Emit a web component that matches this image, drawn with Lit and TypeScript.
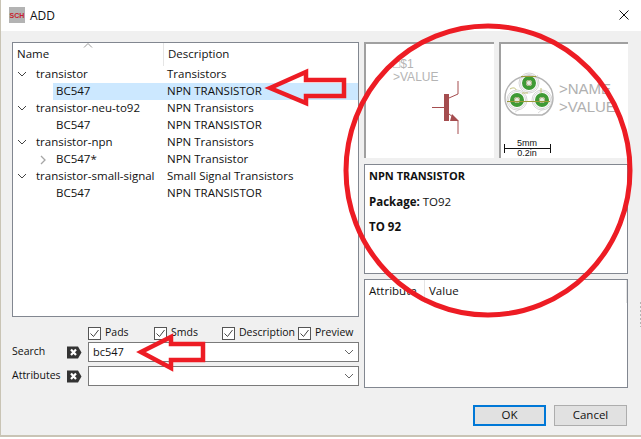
import { LitElement, html, css, svg } from "lit";
import { customElement } from "lit/decorators.js";

const rows = [
  { name: "transistor", desc: "Transistors", level: 0 },
  { name: "BC547", desc: "NPN TRANSISTOR", level: 1, selected: true },
  { name: "transistor-neu-to92", desc: "NPN Transistors", level: 0 },
  { name: "BC547", desc: "NPN TRANSISTOR", level: 1 },
  { name: "transistor-npn", desc: "NPN Transistors", level: 0 },
  { name: "BC547*", desc: "NPN Transistor", level: 1, closed: true },
  { name: "transistor-small-signal", desc: "Small Signal Transistors", level: 0 },
  { name: "BC547", desc: "NPN TRANSISTOR", level: 1 },
];

const chevron = (color: string) => html`<svg class="combo-arrow" width="10" height="6" viewBox="0 0 10 6">
  <path d="M1 1l4 4 4-4" fill="none" stroke=${color} stroke-width="1" />
</svg>`;

const clearIcon = html`<svg width="16" height="13" viewBox="0 0 16 13">
  <path d="M1 .5h11l3.5 6-3.5 6H1z" fill="#333" />
  <path d="M5 3.5l5 5.5M10 3.5L5 9" fill="none" stroke="#fff" stroke-width="2.2" />
</svg>`;

const check = (label: string) => html`<label class="check">
  <svg width="13" height="13" viewBox="0 0 13 13">
    <rect x=".5" y=".5" width="12" height="12" fill="#fff" stroke="#555" />
    <path d="M2.5 6.5l3 3 5-6.5" fill="none" stroke="#444" stroke-width="1" />
  </svg>
  <span>${label}</span>
</label>`;

const padAt = (x: number, y: number) => svg`
  <circle cx=${x} cy=${y} r="10" fill="none" stroke="#c4c4c4" stroke-width=".7" />
  <circle cx=${x} cy=${y} r="8.5" fill="none" stroke="#c4c4c4" stroke-width=".7" />
  <circle cx=${x} cy=${y} r="5" fill="none" stroke="#3f9a35" stroke-width="4" />
  <circle cx=${x} cy=${y} r="2.6" fill="#e6ece2" stroke="#8c8c50" stroke-width=".7" />
`;

@customElement("app-root")
export class AppRoot extends LitElement {
  static styles = css`
    :host {
      display: block;
      width: 641px;
      height: 439px;
      background: #fff;
      font-family: "Open Sans", "Noto Sans", sans-serif;
      font-size: 11.5px;
      color: #111;
      overflow: hidden;
    }
    .window {
      position: relative;
      height: 437px;
      box-sizing: border-box;
      border-left: 1px solid #c9c4b5;
      border-bottom: 2px solid #c9c4b5;
      display: flex;
      flex-direction: column;
    }
    .titlebar {
      height: 30px;
      flex: none;
      display: flex;
      align-items: center;
      padding: 0 12px 1px 8px;
      gap: 5px;
      background: #fff;
    }
    .app-icon {
      width: 16px;
      height: 16px;
      background: #b3b3b3;
      color: #c8202c;
      font: bold 7px "Liberation Sans", sans-serif;
      display: flex;
      align-items: center;
      justify-content: center;
    }
    .title {
      flex: 1;
      font-size: 12px;
    }
    .body {
      flex: 1;
      background: #f0f0f0;
      display: grid;
      grid-template-columns: 347px 264px;
      column-gap: 5px;
      padding: 11px 0 0 11px;
    }
    .left,
    .right {
      display: flex;
      flex-direction: column;
    }
    .tree {
      height: 275px;
      box-sizing: border-box;
      border: 1px solid #828790;
      background: #fff;
      position: relative;
    }
    .header {
      height: 23px;
      display: grid;
      grid-template-columns: 151px 1fr;
      align-items: center;
    }
    .header span {
      height: 100%;
      display: flex;
      align-items: center;
      padding: 0 0 2px 4px;
      box-sizing: border-box;
    }
    .header span:first-child {
      border-right: 1px solid #e5e5e5;
    }
    .sort {
      position: absolute;
      left: 70px;
      top: 0;
    }
    .row {
      height: 17px;
      display: grid;
      grid-template-columns: 154px 1fr;
      align-items: center;
      white-space: nowrap;
    }
    .name {
      display: flex;
      align-items: center;
      height: 100%;
    }
    .name span {
      padding-bottom: 2px;
      box-sizing: border-box;
    }
    .twist {
      width: 23px;
      flex: none;
      display: flex;
      justify-content: flex-end;
      padding: 0 9px 2px 0;
      box-sizing: border-box;
    }
    .sub .name {
      padding-left: 43px;
    }
    .sub .twist {
      width: 6px;
      margin-left: -16px;
      margin-right: 10px;
      padding: 0;
    }
    .desc {
      height: 100%;
      display: flex;
      align-items: center;
      padding-bottom: 2px;
      box-sizing: border-box;
    }
    .selected .name span,
    .selected .desc {
      background: #cce8ff;
    }
    .selected .name span {
      height: 100%;
      display: flex;
      align-items: center;
      flex: 1;
      margin-left: -3px;
      padding-left: 3px;
    }
    .checks {
      display: grid;
      grid-template-columns: 66px 68px 76px auto;
      margin: 8px 0 4px 76px;
      height: 13px;
      font-size: 10.5px;
    }
    .check {
      display: flex;
      align-items: center;
      gap: 4px;
    }
    .check span {
      padding-bottom: 2px;
    }
    .field {
      display: grid;
      grid-template-columns: 54px 22px 1fr;
      align-items: center;
      height: 20px;
      margin-bottom: 4px;
    }
    .field > span {
      font-size: 10.5px;
      padding-bottom: 2px;
    }
    .combo {
      height: 20px;
      box-sizing: border-box;
      border: 1px solid #7a7a7a;
      background: #fff;
      display: flex;
      align-items: center;
      justify-content: space-between;
      padding: 0 4px 0 4px;
      font-size: 11px;
    }
    .combo span {
      padding-bottom: 2px;
    }
    .previews {
      height: 116px;
      display: grid;
      grid-template-columns: 130px 129px;
      column-gap: 5px;
    }
    .preview {
      background: #fff;
      border-top: 2px solid #a0a0a0;
      border-left: 2px solid #a0a0a0;
    }
    .preview svg {
      display: block;
    }
    .info {
      height: 110px;
      box-sizing: border-box;
      margin-top: 6px;
      border: 1px solid #828790;
      background: #fff;
      padding: 3px 4px;
    }
    .info p {
      margin: 0 0 9.5px;
      line-height: 16px;
    }
    .info p:first-child {
      font-size: 11px;
    }
    .info b {
      font-weight: 700;
    }
    .attrs {
      height: 109px;
      box-sizing: border-box;
      margin-top: 5px;
      border: 1px solid #828790;
      background: #fff;
    }
    .attrs-head {
      height: 23px;
      display: grid;
      grid-template-columns: 60px 1fr;
      border-right: 1px solid #e5e5e5;
    }
    .attrs-head span {
      display: flex;
      align-items: center;
      padding: 0 0 2px 4px;
      overflow: hidden;
    }
    .attrs-head span:first-child {
      border-right: 1px solid #e5e5e5;
    }
    .buttons {
      display: flex;
      justify-content: flex-end;
      gap: 8px;
      margin-top: 17px;
      padding-right: 1px;
    }
    button {
      font: inherit;
      color: #111;
      width: 73px;
      height: 21px;
      padding: 0 0 2px;
      background: #e1e1e1;
      border: 1px solid #adadad;
    }
    button.primary {
      border: 2px solid #0078d7;
    }
    .close {
      display: block;
    }
    .annotations {
      position: absolute;
      left: -1px;
      top: 0;
      pointer-events: none;
    }
    .grip {
      position: absolute;
      right: 0;
      top: 302px;
      width: 1px;
      height: 25px;
      background: repeating-linear-gradient(#b5b5b5 0 2px, transparent 2px 4px);
    }
  `;

  render() {
    return html`<div class="window">
      <div class="titlebar">
        <div class="app-icon">SCH</div>
        <div class="title">ADD</div>
        <svg class="close" width="10" height="10" viewBox="0 0 10 10">
          <path d="M.5.5l9 9M9.5.5l-9 9" stroke="#111" fill="none" />
        </svg>
      </div>
      <div class="body">
        <div class="left">
          <div class="tree">
            <div class="header">
              <span>Name</span>
              <span>Description</span>
            </div>
            <svg class="sort" width="10" height="5" viewBox="0 0 10 5">
              <path d="M1 4.5l4-4 4 4" fill="none" stroke="#999" />
            </svg>
            ${rows.map(
              (r) => html`<div class="row ${r.level ? "sub" : ""} ${r.selected ? "selected" : ""}">
                <div class="name">
                  ${r.level === 0
                    ? html`<div class="twist">${chevron("#444")}</div>`
                    : r.closed
                      ? html`<div class="twist">
                          <svg width="6" height="10" viewBox="0 0 6 10" style="flex:none">
                            <path d="M1 1l4 4-4 4" fill="none" stroke="#a6a6a6" stroke-width="1.3" />
                          </svg>
                        </div>`
                      : ""}
                  <span>${r.name}</span>
                </div>
                <div class="desc">${r.desc}</div>
              </div>`,
            )}
          </div>
          <div class="checks">
            ${check("Pads")} ${check("Smds")} ${check("Description")} ${check("Preview")}
          </div>
          <div class="field">
            <span>Search</span>
            ${clearIcon}
            <div class="combo"><span>bc547</span>${chevron("#666")}</div>
          </div>
          <div class="field">
            <span>Attributes</span>
            ${clearIcon}
            <div class="combo"><span></span>${chevron("#666")}</div>
          </div>
        </div>
        <div class="right">
          <div class="previews">
            <div class="preview">
              <svg width="128" height="114" viewBox="366 43 128 114">
                <g font-family="Liberation Sans, sans-serif" font-size="12" fill="#b4b4b4">
                  <text x="393" y="67">□$1</text>
                  <text x="393" y="80">&gt;VALUE</text>
                </g>
                <g stroke="#a54d4f" fill="none" stroke-width="1">
                  <path d="M432 106.5h12M449 97l9-4v-13M449 113l9 7v13" />
                </g>
                <rect x="444" y="93" width="5" height="27" fill="#a54d4f" />
                <path d="M452 113l7 7h-9z" fill="#a54d4f" />
              </svg>
            </div>
            <div class="preview">
              <svg width="127" height="114" viewBox="501 43 127 114">
                <path d="M517 114h25c6-2 11-9 11-17 0-13-11-22-24-22s-24 9-24 22c0 8 5 15 12 17z" fill="none" stroke="#b4b4b4" stroke-width="1.4" />
                ${padAt(529, 82)} ${padAt(517, 99)} ${padAt(542, 99)}
                <path d="M507 100.5h43M521 75.5h16" stroke="#9a9a3a" stroke-width="1.2" fill="none" />
                <path d="M510 88c3-2 6-1 6 1M522 92h6M541 87v5" stroke="#b5b55a" stroke-width=".8" fill="none" />
                <path d="M534 78l4-4M520 108l-5 3M544 107l-6 5" stroke="#cfcfcf" stroke-width=".7" fill="none" />
                <g font-family="Liberation Sans, sans-serif" fill="#b0b0b0" font-size="15">
                  <text x="559" y="93">&gt;NAME</text>
                  <text x="559" y="111">&gt;VALUE</text>
                </g>
                <path d="M504.5 143v9M550.5 143v9M504 147.5h47" stroke="#111" fill="none" />
                <g font-family="Liberation Sans, sans-serif" fill="#111" font-size="9" text-anchor="middle">
                  <text x="527" y="145">5mm</text>
                  <text x="527" y="155">0.2in</text>
                </g>
              </svg>
            </div>
          </div>
          <div class="info">
            <p><b>NPN TRANSISTOR</b></p>
            <p><b>Package:</b> TO92</p>
            <p><b>TO 92</b></p>
          </div>
          <div class="attrs">
            <div class="attrs-head">
              <span>Attribute</span>
              <span>Value</span>
            </div>
          </div>
          <div class="buttons">
            <button class="primary">OK</button>
            <button>Cancel</button>
          </div>
        </div>
      </div>
      <div class="grip"></div>
      <svg class="annotations" width="641" height="439" viewBox="0 0 641 439">
        <g fill="none" stroke="#ed1c24">
          <ellipse cx="488" cy="170.5" rx="142" ry="144.5" stroke-width="5" />
          <path d="M270 88l36-16v8h38v16h-38v7z" stroke-width="4.5" />
          <path d="M141 352l30-15v7h32v16h-32v8z" stroke-width="4.5" />
        </g>
      </svg>
    </div>`;
  }
}
